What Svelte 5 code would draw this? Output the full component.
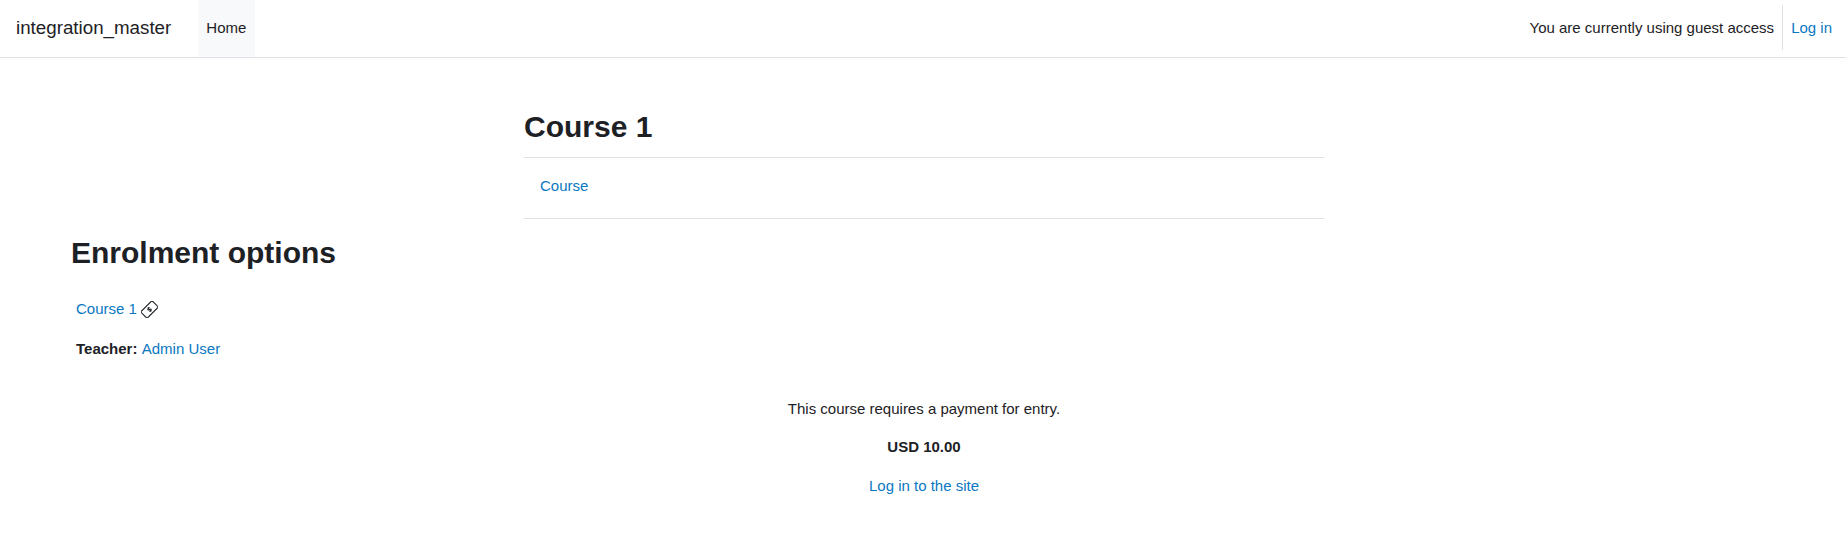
<script>
	const navItems = ['Home'];
</script>

<nav class="navbar">
	<a class="brand" href="#top">integration_master</a>
	<ul class="primary">
		{#each navItems as item}
			<li class="active">{item}</li>
		{/each}
	</ul>
	<div class="usernav">
		<span class="guest">You are currently using guest access</span>
		<a class="login" href="#top">Log in</a>
	</div>
</nav>

<main class="page">
	<header class="course-head">
		<h2>Course 1</h2>
		<div class="secondary"><a href="#top">Course</a></div>
	</header>

	<section class="enrol">
		<h2>Enrolment options</h2>
		<div class="coursebox">
			<p class="name">
				<a href="#top">Course 1</a>
				<svg class="pay" viewBox="0 0 18 18" width="17" height="17" aria-hidden="true">
					<g transform="rotate(-45 9 9)" fill="none" stroke="#1d2125" stroke-width="1.15">
						<rect x="0.5" y="4.2" width="17" height="9.6" rx="0.6" />
						<path d="M10.6 7.600c-.5-.6-2.900-.8-3 .5-.1 1.300 3 .7 2.900 2-.1 1.200-2.500 1-3.100.3M9 6.300v5.400" stroke-width="1" />
					</g>
				</svg>
			</p>
			<p class="teacher"><strong>Teacher:</strong> <a href="#top">Admin User</a></p>
		</div>
		<div class="payment">
			<p>This course requires a payment for entry.</p>
			<p><strong>USD 10.00</strong></p>
			<p><a href="#top">Log in to the site</a></p>
		</div>
	</section>
</main>

<style>
	:global(body) {
		margin: 0;
		background: #fff;
		color: #1d2125;
		font-family: "Liberation Sans", Arial, sans-serif;
		font-size: 15px;
		line-height: 22.5px;
	}

	a {
		color: #0a78c2;
		text-decoration: none;
	}

	.navbar {
		display: flex;
		align-items: stretch;
		height: 57px;
		border-bottom: 1px solid #dee2e6;
		padding: 0 14px 0 16px;
	}

	.brand {
		align-self: center;
		color: #1d2125;
		font-size: 18.75px;
		margin-right: 27px;
	}

	.primary {
		display: flex;
		list-style: none;
		margin: 0;
		padding: 0;
	}

	.primary li {
		display: flex;
		align-items: center;
		padding: 0 9px 0 8px;
		background: #f8f9fa;
	}

	.usernav {
		display: flex;
		align-items: center;
		margin-left: auto;
	}

	.guest {
		padding-right: 8px;
	}

	.login {
		display: flex;
		align-items: center;
		box-sizing: border-box;
		height: 45px;
		margin-bottom: 2px;
		padding: 2px 0 0 8px;
		border-left: 1px solid #dee2e6;
	}

	.page {
		padding-top: 31px;
	}

	.course-head {
		width: 800px;
		margin-left: 524px;
	}

	h2 {
		margin: 0;
		font-size: 30px;
		line-height: 36px;
		font-weight: 700;
	}

	.course-head h2 {
		padding: 20px 0 12px;
		border-bottom: 1px solid #dee2e6;
	}

	.secondary {
		padding: 17px 16px 0;
		height: 61px;
		box-sizing: border-box;
		border-bottom: 1px solid #dee2e6;
	}

	.enrol {
		padding: 0 69px 0 71px;
	}

	.enrol h2 {
		margin-top: 16px;
	}

	.coursebox {
		padding: 26px 5px 0;
	}

	.coursebox p {
		margin: 0 0 16px;
	}

	.name {
		display: flex;
		align-items: center;
		gap: 4px;
		height: 25px;
	}

	.teacher strong {
		margin-right: 1px;
	}

	.payment {
		text-align: center;
		margin-top: 37px;
	}

	.payment p {
		margin: 0 0 16px;
	}
</style>
